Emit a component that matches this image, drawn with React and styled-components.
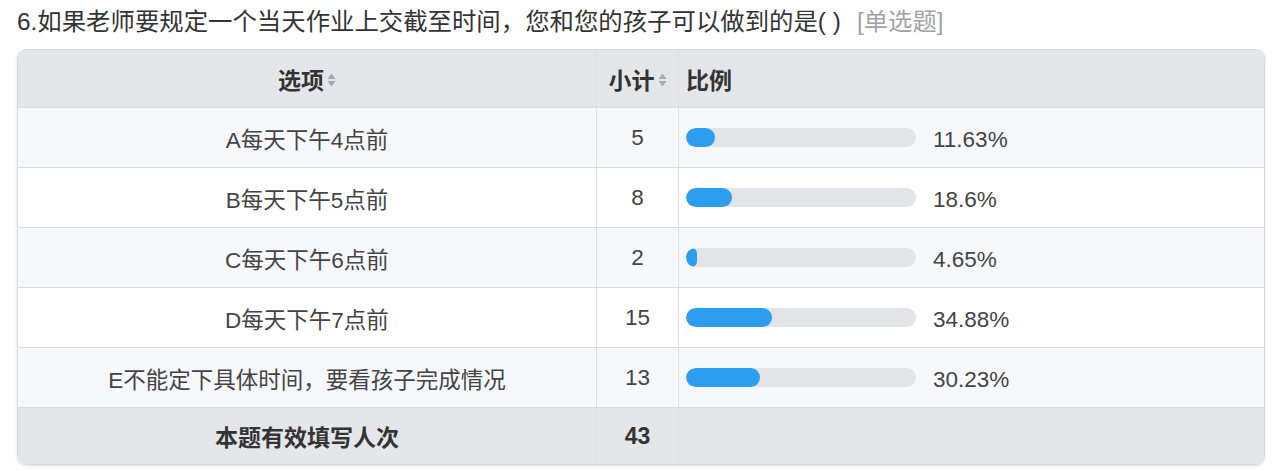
import React from "react";
import styled, { createGlobalStyle } from "styled-components";

const GlobalStyle = createGlobalStyle`
  html, body {
    margin: 0;
    padding: 0;
    background: #ffffff;
  }
  body {
    font-family: "Liberation Sans", "Noto Sans CJK SC", sans-serif;
    color: #333333;
  }
`;

const Page = styled.div`
  width: 1280px;
  height: 470px;
  padding: 7px 17px 0 17px;
  box-sizing: border-box;
`;

const Title = styled.div`
  font-size: 24.4px;
  line-height: 30px;
  color: #333333;
  height: 34px;
  margin-bottom: 8px;
  white-space: nowrap;
`;

const Kind = styled.span`
  color: #a3a3a3;
  margin-left: 16px;
`;

const Table = styled.div`
  width: 1246px;
  border: 1px solid #d8d9dc;
  border-radius: 9px;
  overflow: hidden;
  box-shadow: 0 1px 3px rgba(0, 0, 0, 0.12);
  display: grid;
  grid-template-columns: 578px 82px 1fr;
`;

const Cell = styled.div`
  height: ${(p) => (p.$edge ? "57px" : "60px")};
  box-sizing: border-box;
  display: flex;
  align-items: center;
  justify-content: ${(p) => (p.$left ? "flex-start" : "center")};
  padding: 0 ${(p) => (p.$left ? "0 0 7px" : "0")};
  background: ${(p) => p.$bg};
  border-top: ${(p) => (p.$first ? "none" : "1px solid #dcdde1")};
  border-left: ${(p) => (p.$col > 0 ? "1px solid #dedfe2" : "none")};
  font-size: ${(p) => (p.$bold ? "23px" : "22.5px")};
  font-weight: ${(p) => (p.$bold ? 700 : 400)};
  color: ${(p) => (p.$bold ? "#333333" : "#444444")};
  white-space: nowrap;
`;

const Sort = styled.svg`
  width: 9px;
  height: 14px;
  margin-left: 3px;
  margin-top: 2px;
`;

const Track = styled.div`
  width: 230px;
  height: 19px;
  border-radius: 10px;
  background: #e3e4e7;
  overflow: hidden;
  flex: none;
`;

const Fill = styled.div`
  height: 100%;
  border-radius: 10px;
  background: #2c9ef0;
`;

const Pct = styled.span`
  margin: 5px 0 0 17px;
  color: #444444;
`;

const SortIcon = () => (
  <Sort viewBox="0 0 9 14">
    <path d="M4.5 0.5 L8.5 6 H0.5 Z" fill="#a9a9ad" />
    <path d="M4.5 13.5 L8.5 8 H0.5 Z" fill="#a9a9ad" />
  </Sort>
);

const rows = [
  { label: "A每天下午4点前", count: 5, pct: 11.63, text: "11.63%" },
  { label: "B每天下午5点前", count: 8, pct: 18.6, text: "18.6%" },
  { label: "C每天下午6点前", count: 2, pct: 4.65, text: "4.65%" },
  { label: "D每天下午7点前", count: 15, pct: 34.88, text: "34.88%" },
  { label: "E不能定下具体时间，要看孩子完成情况", count: 13, pct: 30.23, text: "30.23%" },
];

const HEAD = "#e5e6ea";

const App = () => {
  return (
    <Page>
      <GlobalStyle />
      <Title>
        6.如果老师要规定一个当天作业上交截至时间，您和您的孩子可以做到的是( )
        <Kind>[单选题]</Kind>
      </Title>
      <Table>
        <Cell $edge $first $bold $bg={HEAD} $col={0}>
          选项
          <SortIcon />
        </Cell>
        <Cell $edge $first $bold $bg={HEAD} $col={1}>
          小计
          <SortIcon />
        </Cell>
        <Cell $edge $first $bold $left $bg={HEAD} $col={2}>
          比例
        </Cell>
        {rows.map((r, i) => {
          const bg = i % 2 === 0 ? "#f7f8fc" : "#ffffff";
          return (
            <React.Fragment key={r.label}>
              <Cell $bg={bg} $col={0}>{r.label}</Cell>
              <Cell $bg={bg} $col={1}>{r.count}</Cell>
              <Cell $left $bg={bg} $col={2}>
                <Track>
                  <Fill style={{ width: `${Math.round(r.pct * 2.46)}px` }} />
                </Track>
                <Pct>{r.text}</Pct>
              </Cell>
            </React.Fragment>
          );
        })}
        <Cell $edge $bold $bg={HEAD} $col={0}>本题有效填写人次</Cell>
        <Cell $edge $bold $bg={HEAD} $col={1}>43</Cell>
        <Cell $edge $bg={HEAD} $col={2} />
      </Table>
    </Page>
  );
};

export default App;
